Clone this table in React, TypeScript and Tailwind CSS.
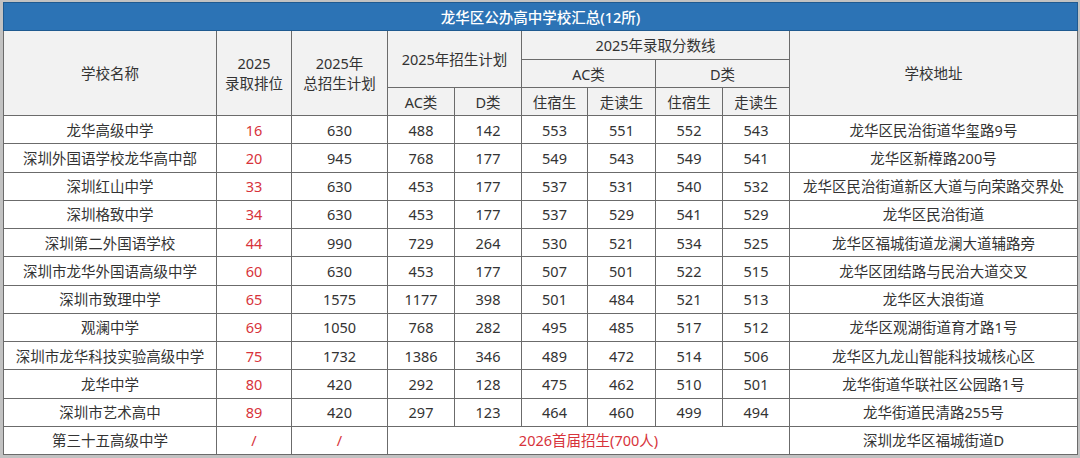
import React from 'react';

type Row = {
  name: string;
  rank: string;
  total: string;
  ac: string;
  d: string;
  acLive: string;
  acDay: string;
  dLive: string;
  dDay: string;
  addr: string;
};

const rows: Row[] = [
  { name: '龙华高级中学', rank: '16', total: '630', ac: '488', d: '142', acLive: '553', acDay: '551', dLive: '552', dDay: '543', addr: '龙华区民治街道华玺路9号' },
  { name: '深圳外国语学校龙华高中部', rank: '20', total: '945', ac: '768', d: '177', acLive: '549', acDay: '543', dLive: '549', dDay: '541', addr: '龙华区新樟路200号' },
  { name: '深圳红山中学', rank: '33', total: '630', ac: '453', d: '177', acLive: '537', acDay: '531', dLive: '540', dDay: '532', addr: '龙华区民治街道新区大道与向荣路交界处' },
  { name: '深圳格致中学', rank: '34', total: '630', ac: '453', d: '177', acLive: '537', acDay: '529', dLive: '541', dDay: '529', addr: '龙华区民治街道' },
  { name: '深圳第二外国语学校', rank: '44', total: '990', ac: '729', d: '264', acLive: '530', acDay: '521', dLive: '534', dDay: '525', addr: '龙华区福城街道龙澜大道辅路旁' },
  { name: '深圳市龙华外国语高级中学', rank: '60', total: '630', ac: '453', d: '177', acLive: '507', acDay: '501', dLive: '522', dDay: '515', addr: '龙华区团结路与民治大道交叉' },
  { name: '深圳市致理中学', rank: '65', total: '1575', ac: '1177', d: '398', acLive: '501', acDay: '484', dLive: '521', dDay: '513', addr: '龙华区大浪街道' },
  { name: '观澜中学', rank: '69', total: '1050', ac: '768', d: '282', acLive: '495', acDay: '485', dLive: '517', dDay: '512', addr: '龙华区观湖街道育才路1号' },
  { name: '深圳市龙华科技实验高级中学', rank: '75', total: '1732', ac: '1386', d: '346', acLive: '489', acDay: '472', dLive: '514', dDay: '506', addr: '龙华区九龙山智能科技城核心区' },
  { name: '龙华中学', rank: '80', total: '420', ac: '292', d: '128', acLive: '475', acDay: '462', dLive: '510', dDay: '501', addr: '龙华街道华联社区公园路1号' },
  { name: '深圳市艺术高中', rank: '89', total: '420', ac: '297', d: '123', acLive: '464', acDay: '460', dLive: '499', dDay: '494', addr: '龙华街道民清路255号' },
];

const th = 'border border-[#6b6b6b] bg-[#f2f2f2] font-normal text-center align-middle leading-[20px] p-0';
const td = 'border border-[#6b6b6b] text-center align-middle p-0 leading-[20px]';

const App: React.FC = () => {
  return (
    <div
      className="w-[1080px] h-[458px] bg-[#c2c2c2] pt-[2px] pl-[3px] text-[14.5px] text-[#333333]"
      style={{ fontFamily: '"Noto Sans", "Noto Sans CJK SC", sans-serif' }}
    >
      <table className="table-fixed border-collapse w-[1074px] bg-white">
        <colgroup>
          <col className="w-[213px]" />
          <col className="w-[75px]" />
          <col className="w-[96px]" />
          <col className="w-[67px]" />
          <col className="w-[67px]" />
          <col className="w-[66px]" />
          <col className="w-[68px]" />
          <col className="w-[67px]" />
          <col className="w-[67px]" />
          <col className="w-[288px]" />
        </colgroup>
        <thead>
          <tr className="h-[28px]">
            <th colSpan={10} className="border border-[#1f5a90] bg-[#2c73b5] text-white font-medium text-center p-0 leading-[20px]">
              龙华区公办高中学校汇总(12所)
            </th>
          </tr>
          <tr className="h-[29px]">
            <th rowSpan={3} className={th}>学校名称</th>
            <th rowSpan={3} className={th}>2025<br />录取排位</th>
            <th rowSpan={3} className={th}>2025年<br />总招生计划</th>
            <th rowSpan={2} colSpan={2} className={th}>2025年招生计划</th>
            <th colSpan={4} className={th}>2025年录取分数线</th>
            <th rowSpan={3} className={th}>学校地址</th>
          </tr>
          <tr className="h-[28px]">
            <th colSpan={2} className={th}>AC类</th>
            <th colSpan={2} className={th}>D类</th>
          </tr>
          <tr className="h-[28px]">
            <th className={th}>AC类</th>
            <th className={th}>D类</th>
            <th className={th}>住宿生</th>
            <th className={th}>走读生</th>
            <th className={th}>住宿生</th>
            <th className={th}>走读生</th>
          </tr>
        </thead>
        <tbody>
          {rows.map((r) => (
            <tr key={r.name} className="h-[28.25px]">
              <td className={td}>{r.name}</td>
              <td className={`${td} text-[#d7333b]`}>{r.rank}</td>
              <td className={td}>{r.total}</td>
              <td className={td}>{r.ac}</td>
              <td className={td}>{r.d}</td>
              <td className={td}>{r.acLive}</td>
              <td className={td}>{r.acDay}</td>
              <td className={td}>{r.dLive}</td>
              <td className={td}>{r.dDay}</td>
              <td className={td}>{r.addr}</td>
            </tr>
          ))}
          <tr className="h-[28.25px]">
            <td className={td}>第三十五高级中学</td>
            <td className={`${td} text-[#d7333b]`}>/</td>
            <td className={`${td} text-[#d7333b]`}>/</td>
            <td colSpan={6} className={`${td} text-[#d7333b]`}>2026首届招生(700人)</td>
            <td className={td}>深圳龙华区福城街道D</td>
          </tr>
        </tbody>
      </table>
    </div>
  );
};

export default App;
